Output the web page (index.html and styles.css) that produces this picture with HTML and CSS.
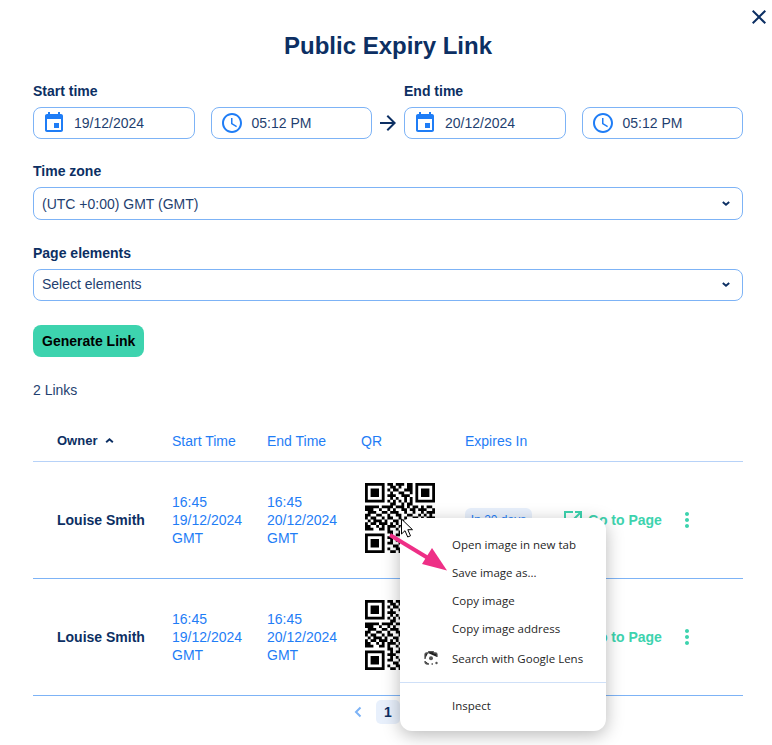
FILE: index.html
```html
<!DOCTYPE html>
<html lang="en">
  <head>
    <meta charset="UTF-8">
    <title>Public Expiry Link</title>
    <link rel="stylesheet" href="styles.css">
  </head>
  <body>
    <svg class="defs" width="0" height="0">
      <defs>
        <symbol id="event" viewBox="0 0 24 24"><path d="M17 12h-5v5h5v-5zM16 1v2H8V1H6v2H5c-1.11 0-1.99.9-1.99 2L3 19c0 1.1.89 2 2 2h14c1.1 0 2-.9 2-2V5c0-1.1-.9-2-2-2h-1V1h-2zm3 18H5V8h14v11z"/></symbol>
        <symbol id="clock" viewBox="0 0 24 24"><path d="M11.99 2C6.47 2 2 6.48 2 12s4.47 10 9.99 10C17.52 22 22 17.52 22 12S17.52 2 11.99 2zM12 20c-4.42 0-8-3.58-8-8s3.58-8 8-8 8 3.58 8 8-3.58 8-8 8zm.5-13H11v6l5.25 3.15.75-1.23-4.5-2.67z"/></symbol>
        <symbol id="open" viewBox="0 0 24 24"><path d="M19 19H5V5h7V3H3v18h18v-9h-2v7zM14 3v2h3.59l-9.83 9.83 1.41 1.41L19 6.41V10h2V3h-7z"/></symbol>
        <symbol id="dots" viewBox="0 0 24 24"><path d="M12 8c1.1 0 2-.9 2-2s-.9-2-2-2-2 .9-2 2 .9 2 2 2zm0 2c-1.1 0-2 .9-2 2s.9 2 2 2 2-.9 2-2-.9-2-2-2zm0 6c-1.1 0-2 .9-2 2s.9 2 2 2 2-.9 2-2-.9-2-2-2z"/></symbol>
        <symbol id="down" viewBox="0 0 10 6"><path d="M1 1l4 3.4L9 1" fill="none" stroke="currentColor" stroke-width="2.400"/></symbol>
        <symbol id="qr" viewBox="0 0 25 25">
          <path fill="none" stroke="#000" d="M0 .5h7M8 .5h2M11 .5h3M15 .5h2M18 .5h7M0 1.5h1M6 1.5h1M9 1.5h2M12 1.5h1M15 1.5h2M18 1.5h1M24 1.5h1M0 2.5h1M2 2.5h3M6 2.5h1M8 2.5h1M10 2.5h2M14 2.5h3M18 2.5h1M20 2.5h3M24 2.5h1M0 3.5h1M2 3.5h3M6 3.5h1M9 3.5h1M12 3.5h2M16 3.5h1M18 3.5h1M20 3.5h3M24 3.5h1M0 4.5h1M2 4.5h3M6 4.5h1M8 4.5h3M13 4.5h3M18 4.5h1M20 4.5h3M24 4.5h1M0 5.5h1M6 5.5h1M9 5.5h1M11 5.5h1M14 5.5h1M16 5.5h1M18 5.5h1M24 5.5h1M0 6.5h7M8 6.5h1M10 6.5h1M12 6.5h1M14 6.5h1M16 6.5h1M18 6.5h7M9 7.5h2M13 7.5h1M15 7.5h2M0 8.5h5M6 8.5h4M11 8.5h3M15 8.5h1M17 8.5h2M20 8.5h1M22 8.5h2M0 9.5h3M5 9.5h1M8 9.5h1M10 9.5h1M13 9.5h2M16 9.5h2M19 9.5h3M24 9.5h1M1 10.5h3M6 10.5h2M9 10.5h3M14 10.5h1M17 10.5h1M20 10.5h1M22 10.5h3M0 11.5h2M4 11.5h2M8 11.5h1M11 11.5h2M15 11.5h2M19 11.5h1M21 11.5h1M23 11.5h1M0 12.5h1M2 12.5h2M6 12.5h1M8 12.5h2M12 12.5h1M14 12.5h1M17 12.5h2M20 12.5h1M22 12.5h3M1 13.5h1M3 13.5h3M7 13.5h1M10 13.5h2M13 13.5h1M16 13.5h1M18 13.5h2M23 13.5h1M0 14.5h1M2 14.5h2M5 14.5h3M9 14.5h1M11 14.5h1M14 14.5h3M19 14.5h2M22 14.5h2M0 15.5h2M4 15.5h1M6 15.5h1M8 15.5h3M12 15.5h2M15 15.5h1M17 15.5h1M20 15.5h1M24 15.5h1M0 16.5h3M5 16.5h2M8 16.5h1M11 16.5h1M13 16.5h1M16 16.5h6M23 16.5h1M8 17.5h2M12 17.5h3M16 17.5h1M20 17.5h1M22 17.5h2M0 18.5h7M9 18.5h1M11 18.5h2M14 18.5h1M16 18.5h1M18 18.5h1M20 18.5h2M24 18.5h1M0 19.5h1M6 19.5h1M8 19.5h3M13 19.5h2M16 19.5h1M20 19.5h1M23 19.5h1M0 20.5h1M2 20.5h3M6 20.5h1M9 20.5h1M11 20.5h1M13 20.5h1M16 20.5h6M24 20.5h1M0 21.5h1M2 21.5h3M6 21.5h1M8 21.5h2M12 21.5h3M17 21.5h2M22 21.5h2M0 22.5h1M2 22.5h3M6 22.5h1M10 22.5h2M14 22.5h1M16 22.5h1M19 22.5h2M23 22.5h2M0 23.5h1M6 23.5h1M8 23.5h1M11 23.5h2M15 23.5h3M20 23.5h1M22 23.5h1M0 24.5h7M9 24.5h2M12 24.5h1M14 24.5h1M17 24.5h2M21 24.5h3"/>
        </symbol>
      </defs>
    </svg>

    <button class="closeBtn" type="button" aria-label="Close">
      <svg width="24" height="24" viewBox="0 0 24 24"><path d="M19 6.41L17.59 5 12 10.59 6.41 5 5 6.41 10.59 12 5 17.59 6.41 19 12 13.41 17.59 19 19 17.59 13.41 12z"/></svg>
    </button>

    <h1>Public Expiry Link</h1>

    <div class="timeRow">
      <div class="timeGroup">
        <div class="label">Start time</div>
        <div class="pair">
          <div class="field"><svg class="ico"><use href="#event"/></svg><span>19/12/2024</span></div>
          <div class="field"><svg class="ico"><use href="#clock"/></svg><span>05:12 PM</span></div>
        </div>
      </div>
      <svg class="timeArrow" width="24" height="24" viewBox="0 0 24 24"><path d="M12 4l-1.41 1.41L16.17 11H4v2h12.17l-5.58 5.59L12 20l8-8z"/></svg>
      <div class="timeGroup">
        <div class="label">End time</div>
        <div class="pair">
          <div class="field"><svg class="ico"><use href="#event"/></svg><span>20/12/2024</span></div>
          <div class="field"><svg class="ico"><use href="#clock"/></svg><span>05:12 PM</span></div>
        </div>
      </div>
    </div>

    <div class="label">Time zone</div>
    <div class="select tall"><span>(UTC +0:00) GMT (GMT)</span><svg class="chev"><use href="#down"/></svg></div>

    <div class="label">Page elements</div>
    <div class="select"><span>Select elements</span><svg class="chev"><use href="#down"/></svg></div>

    <button class="genBtn" type="button">Generate Link</button>

    <div class="count">2 Links</div>

    <table>
      <colgroup>
        <col class="c1"><col class="c2"><col class="c3"><col class="c4"><col class="c5"><col class="c6"><col class="c7">
      </colgroup>
      <thead>
        <tr>
          <th class="owner">Owner <svg class="sort"><use href="#down"/></svg></th>
          <th>Start Time</th>
          <th>End Time</th>
          <th>QR</th>
          <th>Expires In</th>
          <th></th>
          <th></th>
        </tr>
      </thead>
      <tbody>
        <tr>
          <td class="owner">Louise Smith</td>
          <td class="time">16:45<br>19/12/2024<br>GMT</td>
          <td class="time">16:45<br>20/12/2024<br>GMT</td>
          <td><svg class="qr"><use href="#qr"/></svg></td>
          <td><span class="badge">In 20 days</span></td>
          <td><a class="goTo"><svg class="ico"><use href="#open"/></svg>Go to Page</a></td>
          <td><svg class="more"><use href="#dots"/></svg></td>
        </tr>
        <tr>
          <td class="owner">Louise Smith</td>
          <td class="time">16:45<br>19/12/2024<br>GMT</td>
          <td class="time">16:45<br>20/12/2024<br>GMT</td>
          <td><svg class="qr"><use href="#qr"/></svg></td>
          <td></td>
          <td><a class="goTo"><svg class="ico"><use href="#open"/></svg>Go to Page</a></td>
          <td><svg class="more"><use href="#dots"/></svg></td>
        </tr>
      </tbody>
    </table>

    <div class="pager">
      <span class="pageBtn prev"><svg viewBox="0 0 8 12" width="8" height="12"><path d="M6.5 1.5L2 6l4.500 4.500" fill="none" stroke="currentColor" stroke-width="2"/></svg></span>
      <span class="pageBtn current">1</span>
      <span class="pageBtn prev"><svg viewBox="0 0 8 12" width="8" height="12"><path d="M1.500 1.500L6 6l-4.500 4.500" fill="none" stroke="currentColor" stroke-width="2"/></svg></span>
    </div>

    <!-- browser context menu and the annotation on top of the screenshot -->
    <div class="menu">
      <div class="menuItem">Open image in new tab</div>
      <div class="menuItem">Save image as...</div>
      <div class="menuItem">Copy image</div>
      <div class="menuItem">Copy image address</div>
      <div class="menuItem lens">
        <svg width="16" height="16" viewBox="0 0 16 16" fill="none" stroke="#555" stroke-width="1.300">
          <path d="M5 3l.8-1.400h4.400L11 3h1.500q1.500 0 1.500 1.500V7M2 9V4.500Q2 3 3.500 3H5M2 11v.500Q2 14 4.500 14H6M8.500 14H10"/>
          <circle cx="8" cy="8.200" r="2" fill="#555" stroke="none"/>
          <circle cx="13.500" cy="13" r="1.200" fill="#555" stroke="none"/>
        </svg>
        Search with Google Lens
      </div>
      <div class="menuSep"></div>
      <div class="menuItem">Inspect</div>
    </div>

    <svg class="pinkArrow" width="64" height="46" viewBox="0 0 64 46">
      <path d="M1 2l38 23" fill="none" stroke="#ee2f86" stroke-width="4"/>
      <path d="M58 37.500L33 31l10-16z" fill="#ee2f86"/>
    </svg>

    <svg class="cursor" width="14" height="21" viewBox="0 0 14 21">
      <path d="M1.500 1v15l3.500-3.300 2.700 6.300 2.800-1.200-2.700-6.100h4.700z" fill="#fff" stroke="#000" stroke-width="1"/>
    </svg>
  </body>
</html>
```

FILE: styles.css
```css
:root {
    --navy: #0c2f63;
    --blue: #1f7df6;
    --line: #7db3f6;
    --green: #3dd3ae;
}
* {
    box-sizing: border-box;
}
html, body {
    height: 745px;
    overflow: hidden;
}
body {
    position: relative;
    margin: 0;
    padding: 30px 29px 0 33px;
    font-family: "Liberation Sans", Arial, sans-serif;
    font-size: 14px;
    color: var(--navy);
    background: #fff;
}
.defs {
    position: absolute;
}
svg {
    fill: currentColor;
    display: block;
}
h1 {
    margin: 0 0 20px;
    font-size: 24px;
    line-height: 32px;
    text-align: center;
}
.closeBtn {
    position: absolute;
    top: 5px;
    right: 1px;
    padding: 0;
    border: 0;
    background: none;
    color: var(--navy);
}
.label {
    margin-bottom: 7px;
    font-weight: bold;
    line-height: 18px;
}
.timeRow {
    display: flex;
    margin-bottom: 23px;
}
.timeGroup {
    width: 339px;
}
.timeArrow {
    margin: 29px 4px 0;
}
.pair {
    display: flex;
    gap: 16px;
}
.field {
    flex: 1;
    display: flex;
    align-items: center;
    gap: 8px;
    height: 32px;
    padding: 0 8px;
    border: 1px solid var(--line);
    border-radius: 8px;
    color: #1f3f70;
}
.ico {
    width: 24px;
    height: 24px;
    flex: none;
}
.field .ico {
    color: var(--blue);
}
.select {
    display: flex;
    align-items: center;
    justify-content: space-between;
    height: 32px;
    margin-bottom: 24px;
    padding: 0 12px 2px 8px;
    border: 1px solid var(--line);
    border-radius: 8px;
    color: #1f3f70;
}
.select.tall {
    height: 33px;
    padding-bottom: 0;
}
.chev {
    width: 8px;
    height: 5px;
    color: var(--navy);
}
.genBtn {
    display: block;
    height: 32px;
    padding: 0 9px;
    border: 0;
    border-radius: 8px;
    background: var(--green);
    color: #000;
    font: bold 14px "Liberation Sans", Arial, sans-serif;
}
.count {
    margin: 24px 0 22px;
    line-height: 18px;
    color: #1f3f70;
}
table {
    width: 710px;
    table-layout: fixed;
    border-collapse: collapse;
}
.c1 { width: 139px; }
.c2 { width: 95px; }
.c3 { width: 94px; }
.c4 { width: 104px; }
.c5 { width: 99px; }
.c6 { width: 111px; }
.c7 { width: 68px; }
th {
    height: 40px;
    padding: 0;
    border-bottom: 1px solid #b7d2f8;
    font-weight: normal;
    text-align: left;
    color: var(--blue);
}
th.owner {
    padding-left: 24px;
    color: var(--navy);
    font-weight: bold;
    font-size: 13px;
}
.sort {
    display: inline-block;
    width: 9px;
    height: 5px;
    margin-left: 4px;
    vertical-align: 2px;
    transform: scaleY(-1);
}
td {
    height: 117px;
    padding: 0;
    border-bottom: 1px solid var(--line);
    vertical-align: middle;
}
td.owner {
    padding-left: 24px;
    font-weight: bold;
}
.time {
    color: var(--blue);
    line-height: 18px;
}
.qr {
    width: 70px;
    height: 70px;
    margin: 0 0 4px 4px;
}
.badge {
    display: block;
    width: 67px;
    height: 24px;
    padding-top: 5px;
    border-radius: 6px;
    background: #e8f0fc;
    color: var(--blue);
    font-size: 12px;
    text-align: center;
}
.goTo {
    display: flex;
    align-items: center;
    gap: 3px;
    margin-left: -3px;
    color: var(--green);
    font-weight: bold;
    white-space: nowrap;
}
.more {
    width: 24px;
    height: 24px;
    color: var(--green);
}
.pager {
    display: flex;
    justify-content: center;
    gap: 6px;
    margin-top: 4px;
}
.pageBtn {
    display: flex;
    align-items: center;
    justify-content: center;
    width: 24px;
    height: 24px;
    border-radius: 5px;
    font-weight: bold;
}
.prev {
    color: #7db3f6;
}
.current {
    background: #e8f0fc;
}
.menu {
    position: absolute;
    top: 518px;
    left: 400px;
    width: 206px;
    height: 213px;
    padding-top: 13px;
    background: #fff;
    border-radius: 12px;
    box-shadow: 0 4px 18px rgba(0, 0, 0, 0.28);
    font-family: "Open Sans", sans-serif;
    font-size: 11.5px;
    color: #1f1f1f;
}
.menuItem {
    display: flex;
    align-items: center;
    height: 28px;
    padding: 0 0 2px 52px;
}
.menuItem.lens {
    position: relative;
    height: 30px;
    padding-bottom: 0;
}
.lens svg {
    position: absolute;
    left: 23px;
    top: 7px;
}
.menuSep {
    height: 1px;
    margin: 9px 0;
    background: #cfe0f8;
}
.pinkArrow {
    position: absolute;
    top: 533px;
    left: 389px;
}
.cursor {
    position: absolute;
    top: 518px;
    left: 400px;
}
```
